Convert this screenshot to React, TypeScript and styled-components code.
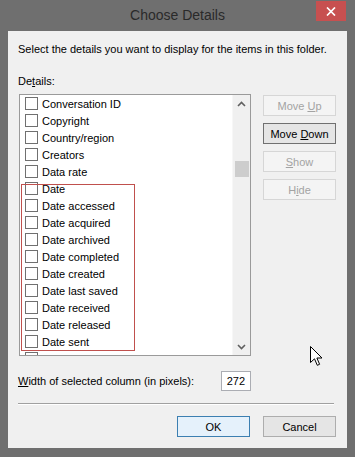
import React from 'react';
import styled, { createGlobalStyle } from 'styled-components';

const GlobalStyle = createGlobalStyle`
  html, body {
    margin: 0;
    padding: 0;
    background: #6f6f6f;
  }
  body {
    font-family: "Liberation Sans", Arial, sans-serif;
  }
`;

const Window = styled.div`
  position: relative;
  width: 355px;
  height: 457px;
  box-sizing: border-box;
  padding: 0 8px 9px 8px;
  background-color: #6f6f6f;
  display: flex;
  flex-direction: column;
  overflow: hidden;
`;

const TitleBar = styled.div`
  height: 31px;
  flex: 0 0 31px;
  display: grid;
  grid-template-columns: 1fr auto 1fr;
  align-items: start;
`;

const Title = styled.div`
  grid-column: 2;
  margin-top: 6px;
  font-size: 14px;
  line-height: 18px;
  color: #2a2a2a;
  white-space: nowrap;
`;

const CloseButton = styled.div`
  grid-column: 3;
  justify-self: end;
  margin-top: 1px;
  margin-right: 1px;
  width: 30px;
  height: 20px;
  background-color: #c75050;
  display: flex;
  align-items: center;
  justify-content: center;
`;

const Client = styled.div`
  flex: 1;
  background-color: #f0f0f0;
  padding: 11px 11px 11px 10px;
  display: flex;
  flex-direction: column;
  font-size: 11px;
  color: #000;
`;

const Text = styled.div<{ $top?: number }>`
  margin-top: ${(p) => p.$top || 0}px;
  line-height: 15px;
  white-space: nowrap;
`;

const Key = styled.span`
  text-decoration: underline;
  text-underline-offset: 1px;
`;

const MainRow = styled.div`
  margin-top: 5px;
  display: flex;
  align-items: flex-start;
`;

const ListWrap = styled.div`
  position: relative;
  margin-left: 1px;
  width: 232px;
  height: 262px;
  box-sizing: border-box;
  border: 1px solid #9a9a9a;
  background: #fff;
  display: flex;
`;

const Items = styled.div`
  flex: 1;
  overflow: hidden;
`;

const Row = styled.div`
  height: 17px;
  display: flex;
  align-items: center;
  padding-left: 5px;
  white-space: nowrap;
`;

const CheckBox = styled.span`
  width: 13px;
  height: 13px;
  box-sizing: border-box;
  border: 1px solid #707070;
  background: #fff;
  margin-right: 4px;
  flex: 0 0 13px;
`;

const ScrollBar = styled.div`
  width: 17px;
  background: #f0f0f0;
  display: flex;
  flex-direction: column;
  border-left: 1px solid #f7f7f7;
`;

const ScrollArrow = styled.div`
  height: 17px;
  display: flex;
  align-items: center;
  justify-content: center;
`;

const Track = styled.div`
  flex: 1;
  display: flex;
  flex-direction: column;
  align-items: center;
`;

const Thumb = styled.div<{ $offset: number }>`
  margin-top: ${(p) => p.$offset}px;
  width: 14px;
  height: 16px;
  background: #cdcdcd;
`;

const Highlight = styled.div`
  position: absolute;
  left: 1px;
  top: 89px;
  width: 114px;
  height: 167px;
  box-sizing: border-box;
  border: 1px solid #c0504d;
  pointer-events: none;
`;

const SideButtons = styled.div`
  margin-left: 12px;
  margin-top: 1px;
  display: flex;
  flex-direction: column;
  gap: 7px;
`;

type Variant = 'disabled' | 'focus' | 'default' | 'normal';

const Button = styled.div<{ $variant?: Variant }>`
  width: 73px;
  height: 21px;
  box-sizing: border-box;
  display: flex;
  align-items: center;
  justify-content: center;
  font-size: 11px;
  white-space: pre;
  border: 1px solid
    ${(p) =>
      p.$variant === 'disabled'
        ? '#d6d6d6'
        : p.$variant === 'focus'
        ? '#707070'
        : p.$variant === 'default'
        ? '#3c7fb1'
        : '#adadad'};
  background: ${(p) =>
    p.$variant === 'disabled'
      ? '#f4f4f4'
      : p.$variant === 'default'
      ? '#e5f1fb'
      : '#e5e5e5'};
  color: ${(p) => (p.$variant === 'disabled' ? '#a3a3a3' : '#000')};
`;

const WidthRow = styled.div`
  margin-top: 15px;
  width: 233px;
  height: 20px;
  display: flex;
  align-items: center;
  justify-content: space-between;
`;

const NumberBox = styled.div`
  width: 30px;
  height: 20px;
  box-sizing: border-box;
  border: 1px solid #abadb3;
  background: #fff;
  display: flex;
  align-items: center;
  justify-content: flex-end;
  padding-right: 5px;
`;

const Separator = styled.div`
  margin-top: 12px;
  margin-right: 2px;
  height: 1px;
  background: #a0a0a0;
  border-bottom: 1px solid #ffffff;
`;

const Footer = styled.div`
  margin-top: 11px;
  display: flex;
  justify-content: flex-end;
  gap: 13px;
`;

const Cursor = styled.svg`
  position: absolute;
  left: 310px;
  top: 346px;
`;

const items = [
  'Conversation ID',
  'Copyright',
  'Country/region',
  'Creators',
  'Data rate',
  'Date',
  'Date accessed',
  'Date acquired',
  'Date archived',
  'Date completed',
  'Date created',
  'Date last saved',
  'Date received',
  'Date released',
  'Date sent',
  '',
];

const Chevron: React.FC<{ up?: boolean }> = ({ up }) => (
  <svg width="9" height="6" viewBox="0 0 9 6">
    <polyline
      points={up ? '1,5 4.5,1.5 8,5' : '1,1 4.5,4.5 8,1'}
      fill="none"
      stroke="#606060"
      strokeWidth="1.6"
    />
  </svg>
);

const App: React.FC = () => (
  <Window>
    <GlobalStyle />
    <TitleBar>
      <Title>Choose Details</Title>
      <CloseButton>
        <svg width="10" height="9" viewBox="0 0 10 9">
          <path d="M1 0.5 L9 8.5 M9 0.5 L1 8.5" stroke="#fff" strokeWidth="1.7" />
        </svg>
      </CloseButton>
    </TitleBar>
    <Client>
      <Text>Select the details you want to display for the items in this folder.</Text>
      <Text $top={17}>
        De<Key>t</Key>ails:
      </Text>
      <MainRow>
        <ListWrap>
          <Items>
            {items.map((name, i) => (
              <Row key={i}>
                <CheckBox />
                {name}
              </Row>
            ))}
          </Items>
          <ScrollBar>
            <ScrollArrow>
              <Chevron up />
            </ScrollArrow>
            <Track>
              <Thumb $offset={49} />
            </Track>
            <ScrollArrow>
              <Chevron />
            </ScrollArrow>
          </ScrollBar>
          <Highlight />
        </ListWrap>
        <SideButtons>
          <Button $variant="disabled">
            <span>
              Move <Key>U</Key>p
            </span>
          </Button>
          <Button $variant="focus">
            <span>
              Move <Key>D</Key>own
            </span>
          </Button>
          <Button $variant="disabled">
            <span>
              <Key>S</Key>how
            </span>
          </Button>
          <Button $variant="disabled">
            <span>
              H<Key>i</Key>de
            </span>
          </Button>
        </SideButtons>
      </MainRow>
      <WidthRow>
        <span>
          <Key>W</Key>idth of selected column (in pixels):
        </span>
        <NumberBox>272</NumberBox>
      </WidthRow>
      <Separator />
      <Footer>
        <Button $variant="default">OK</Button>
        <Button $variant="normal">Cancel</Button>
      </Footer>
    </Client>
    <Cursor width="13" height="21" viewBox="0 0 13 21">
      <path
        d="M0.5 0.5 L0.5 16.5 L4.5 12.8 L7.3 19.3 L9.6 18.3 L6.9 12 L12 12 Z"
        fill="#fff"
        stroke="#000"
        strokeWidth="1"
        strokeLinejoin="miter"
      />
    </Cursor>
  </Window>
);

export default App;
